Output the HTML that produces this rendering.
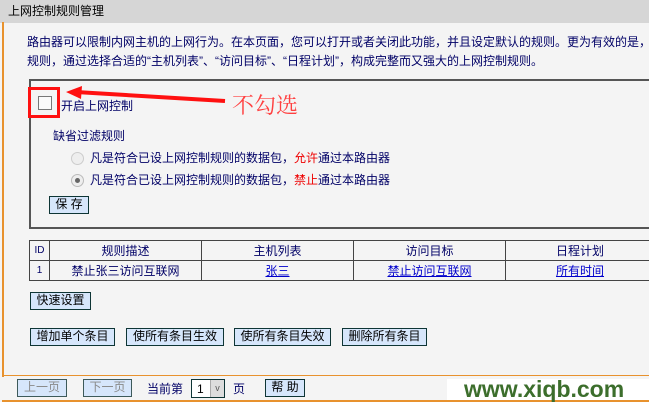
<!DOCTYPE html>
<html><head><meta charset="utf-8"><style>
*{margin:0;padding:0;box-sizing:border-box}
body{width:649px;height:402px;background:#f4f4f4;font-family:"Liberation Sans","Noto Sans CJK SC","WenQuanYi Zen Hei",sans-serif;font-size:12px;color:#000066;position:relative;overflow:hidden}
.a{position:absolute;white-space:nowrap;line-height:14px}
.btn{position:absolute;background:#d6e6fb;border:1px solid #0e3535;color:#000;text-align:center;font-size:12px;line-height:15px;height:18px;white-space:nowrap;overflow:hidden}
.dis{color:#8a8a8a;border-color:#3d5a5a}
table{table-layout:fixed}
td{border:1px solid #444;text-align:center;height:20px;font-size:12px;color:#000066;white-space:nowrap;overflow:hidden}
a{color:#0000cc;text-decoration:underline}
</style></head><body>
<div class="a" style="left:0;top:0;width:649px;height:23px;background:#d6d6d6"></div>
<div class="a" style="left:8px;top:4px;color:#000;font-size:12px">上网控制规则管理</div>
<div class="a" style="left:2px;top:22px;width:2px;height:355px;background:#e8922e"></div>
<div class="a" style="left:27px;top:35px">路由器可以限制内网主机的上网行为。在本页面，您可以打开或者关闭此功能，并且设定默认的规则。更为有效的是，</div>
<div class="a" style="left:27px;top:54px">规则，通过选择合适的“主机列表”、“访问目标”、“日程计划”，构成完整而又强大的上网控制规则。</div>
<div class="a" style="left:29px;top:79px;width:640px;height:150px;border:2px solid #555;border-right:none"></div>
<div class="a" style="left:28px;top:87px;width:32px;height:31px;border:3px solid #ff1010"></div>
<div class="a" style="left:38px;top:96px;width:14px;height:14px;border:1px solid #777;background:#fafafa"></div>
<div class="a" style="left:61px;top:99px">开启上网控制</div>
<svg class="a" style="left:60px;top:84px" width="180" height="24"><line x1="16" y1="8" x2="165" y2="17" stroke="#ff1010" stroke-width="4"/><polygon points="6,8 22,2 21,15" fill="#ff1010"/></svg>
<div class="a" style="left:232px;top:93px;color:#ff4040;font-size:22px;line-height:24px;font-family:'Noto Serif CJK SC',serif">不勾选</div>
<div class="a" style="left:53px;top:129px">缺省过滤规则</div>
<div class="a" style="left:71px;top:152px;width:13px;height:13px;border-radius:50%;border:1px solid #ccc;background:#eee"></div>
<div class="a" style="left:90px;top:151px">凡是符合已设上网控制规则的数据包，<span style="color:#e00">允许</span>通过本路由器</div>
<div class="a" style="left:71px;top:174px;width:13px;height:13px;border-radius:50%;border:1px solid #bbb;background:#eee"><div style="width:5px;height:5px;border-radius:50%;background:#666;margin:3px"></div></div>
<div class="a" style="left:90px;top:173px">凡是符合已设上网控制规则的数据包，<span style="color:#e00">禁止</span>通过本路由器</div>
<div class="btn" style="left:49px;top:196px;width:40px">保 存</div>
<table class="a" style="left:29px;top:240px;border-collapse:collapse;width:640px">
<colgroup><col style="width:20px"><col style="width:152px"><col style="width:152px"><col style="width:152px"><col></colgroup>
<tr><td style="font-size:10px">ID</td><td>规则描述</td><td>主机列表</td><td>访问目标</td><td style="text-align:left;padding-left:50px">日程计划</td></tr>
<tr><td style="font-size:10px">1</td><td>禁止张三访问互联网</td><td><a>张三</a></td><td><a>禁止访问互联网</a></td><td style="text-align:left;padding-left:50px"><a>所有时间</a></td></tr>
</table>
<div class="btn" style="left:30px;top:292px;width:61px">快速设置</div>
<div class="btn" style="left:30px;top:328px;width:85px">增加单个条目</div>
<div class="btn" style="left:126px;top:328px;width:98px">使所有条目生效</div>
<div class="btn" style="left:234px;top:328px;width:97px">使所有条目失效</div>
<div class="btn" style="left:342px;top:328px;width:85px">删除所有条目</div>
<div class="a" style="left:2px;top:375px;width:647px;height:1px;background:#e8922e"></div>
<div class="a" style="left:2px;top:400px;width:647px;height:2px;background:#e8922e"></div>
<div class="btn dis" style="left:17px;top:379px;width:50px">上一页</div>
<div class="btn dis" style="left:83px;top:379px;width:49px">下一页</div>
<div class="a" style="left:147px;top:382px">当前第</div>
<div class="a" style="left:191px;top:379px;width:34px;height:19px;border:1px solid #0e3535;background:#fff;color:#000"><span style="position:absolute;left:5px;top:2px">1</span><div style="position:absolute;right:0;top:0;width:14px;height:17px;background:#ddd;border-left:1px solid #aaa;font-size:9px;text-align:center;line-height:17px;color:#555">v</div></div>
<div class="a" style="left:233px;top:382px">页</div>
<div class="btn" style="left:265px;top:379px;width:40px">帮 助</div>
<div class="a" style="left:447px;top:379px;width:202px;height:21px;background:#fff"></div>
<div class="a" style="left:464px;top:377px;color:#3c6e2c;font-size:23px;line-height:25px;font-weight:bold;font-family:'Liberation Sans',sans-serif">www.xiqb.com</div>
</body></html>
